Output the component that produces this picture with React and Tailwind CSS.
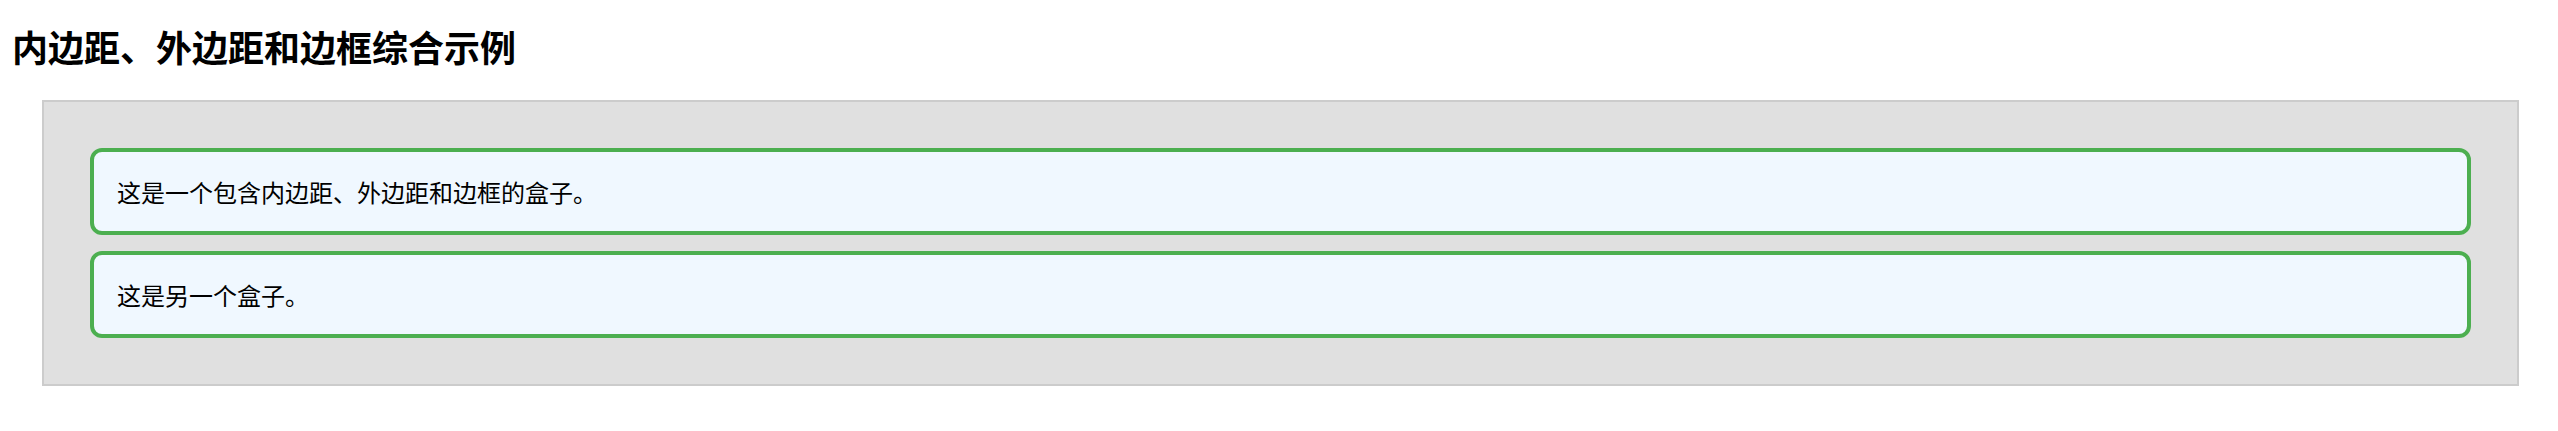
import React from 'react';

const boxes = [
  '这是一个包含内边距、外边距和边框的盒子。',
  '这是另一个盒子。',
];

const App = () => {
  return (
    <div className="bg-white p-[12px] text-black font-['Noto_Sans_CJK_SC','Noto_Sans',sans-serif]">
      <h2 className="mt-[16px] text-[36px] font-bold leading-[36px]">内边距、外边距和边框综合示例</h2>

      {/* Outer container */}
      <div className="ml-[30px] mt-[36px] w-[2477px] border-2 border-[#cccccc] bg-[#e0e0e0] p-[46px] flex flex-col gap-[16px]">
        {boxes.map((text) => (
          <div
            key={text}
            className="rounded-[12px] border-4 border-[#4caf50] bg-[#f0f8ff] px-[23px] py-[23px] text-[24px] leading-[33px]"
          >
            {text}
          </div>
        ))}
      </div>
    </div>
  );
};

export default App;
